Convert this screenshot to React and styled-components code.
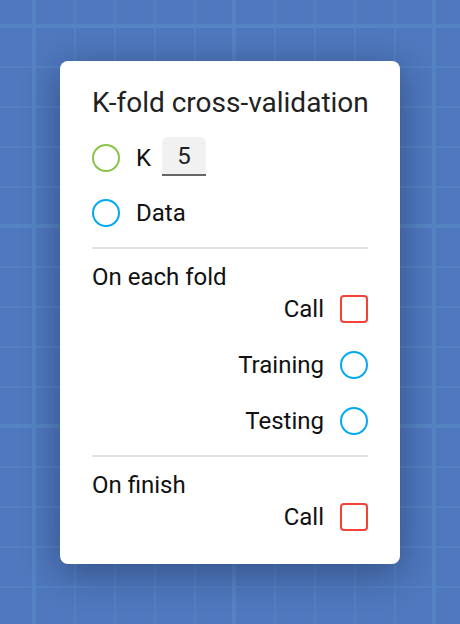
import styled, { createGlobalStyle } from 'styled-components';

const GlobalStyle = createGlobalStyle`
  html, body {
    margin: 0;
    height: 100%;
  }
  body {
    font-family: Roboto, "Liberation Sans", sans-serif;
  }
`;

const foldPorts = [
  { label: 'Call', kind: 'call' },
  { label: 'Training', kind: 'data' },
  { label: 'Testing', kind: 'data' },
];

const App = () => {
  return (
    <Canvas>
      <GlobalStyle />
      <Panel>
        <Title>K-fold cross-validation</Title>
        <InputRow>
          <Port $color='#8bc34a' />
          <Label>K</Label>
          <NumberField>5</NumberField>
        </InputRow>
        <InputRow>
          <Port $color='#03a9f4' />
          <Label>Data</Label>
        </InputRow>
        <Divider />
        <Section>
          <SectionTitle>On each fold</SectionTitle>
          <PortList>
            {foldPorts.map((p) => (
              <OutputRow key={p.label}>
                <Label>{p.label}</Label>
                {p.kind === 'call' ? <CallPort /> : <Port $color='#03a9f4' />}
              </OutputRow>
            ))}
          </PortList>
        </Section>
        <Divider />
        <Section>
          <SectionTitle>On finish</SectionTitle>
          <OutputRow>
            <Label>Call</Label>
            <CallPort />
          </OutputRow>
        </Section>
      </Panel>
    </Canvas>
  );
};

export default App;

const Canvas = styled.div`
  min-height: 100vh;
  display: flex;
  align-items: center;
  justify-content: center;
  background-color: #4f78be;
  background-image:
    linear-gradient(90deg, #5584c4 4px, transparent 4px),
    linear-gradient(180deg, #5584c4 4px, transparent 4px),
    linear-gradient(90deg, #5281c2 2px, transparent 2px),
    linear-gradient(180deg, #5281c2 2px, transparent 2px);
  background-size: 200px 100%, 100% 200px, 40px 100%, 100% 40px;
  background-position: 32px 0, 0 24px, 34px 0, 0 26px;
`;

const Panel = styled.div`
  width: 340px;
  box-sizing: border-box;
  padding: 26px 32px 27px;
  background: #fff;
  border-radius: 8px;
  box-shadow: 0 8px 36px rgba(20, 30, 60, 0.45);
  display: flex;
  flex-direction: column;
`;

const Title = styled.div`
  font-size: 28px;
  line-height: 32px;
  color: #222;
  white-space: nowrap;
  margin-bottom: 19px;
`;

const InputRow = styled.div`
  display: flex;
  align-items: center;
  height: 40px;
  & + & {
    margin-top: 15px;
  }
`;

const Port = styled.div`
  width: 28px;
  height: 28px;
  box-sizing: border-box;
  border-radius: 50%;
  border: 2px solid ${({ $color }) => $color};
  flex-shrink: 0;
`;

const CallPort = styled.div`
  width: 28px;
  height: 28px;
  box-sizing: border-box;
  border-radius: 4px;
  border: 2px solid #f44336;
  flex-shrink: 0;
`;

const Label = styled.span`
  font-size: 24px;
  color: #111;
  margin: 0 16px;
`;

const NumberField = styled.div`
  width: 44px;
  height: 39px;
  box-sizing: border-box;
  margin-left: -5px;
  margin-top: -2px;
  background: #f1f1f1;
  border-radius: 6px 6px 0 0;
  border-bottom: 2px solid #666;
  display: flex;
  align-items: center;
  justify-content: center;
  font-size: 24px;
  color: #222;
`;

const Divider = styled.div`
  height: 2px;
  background: #e2e2e2;
  margin-top: 14px;
`;

const Section = styled.div`
  display: flex;
  flex-direction: column;
  margin-top: 16px;
`;

const SectionTitle = styled.div`
  font-size: 24px;
  line-height: 24px;
  color: #111;
`;

const PortList = styled.div`
  display: flex;
  flex-direction: column;
  gap: 16px;
`;

const OutputRow = styled.div`
  display: flex;
  align-items: center;
  justify-content: flex-end;
  height: 40px;
  & > span {
    margin-left: 0;
  }
`;
